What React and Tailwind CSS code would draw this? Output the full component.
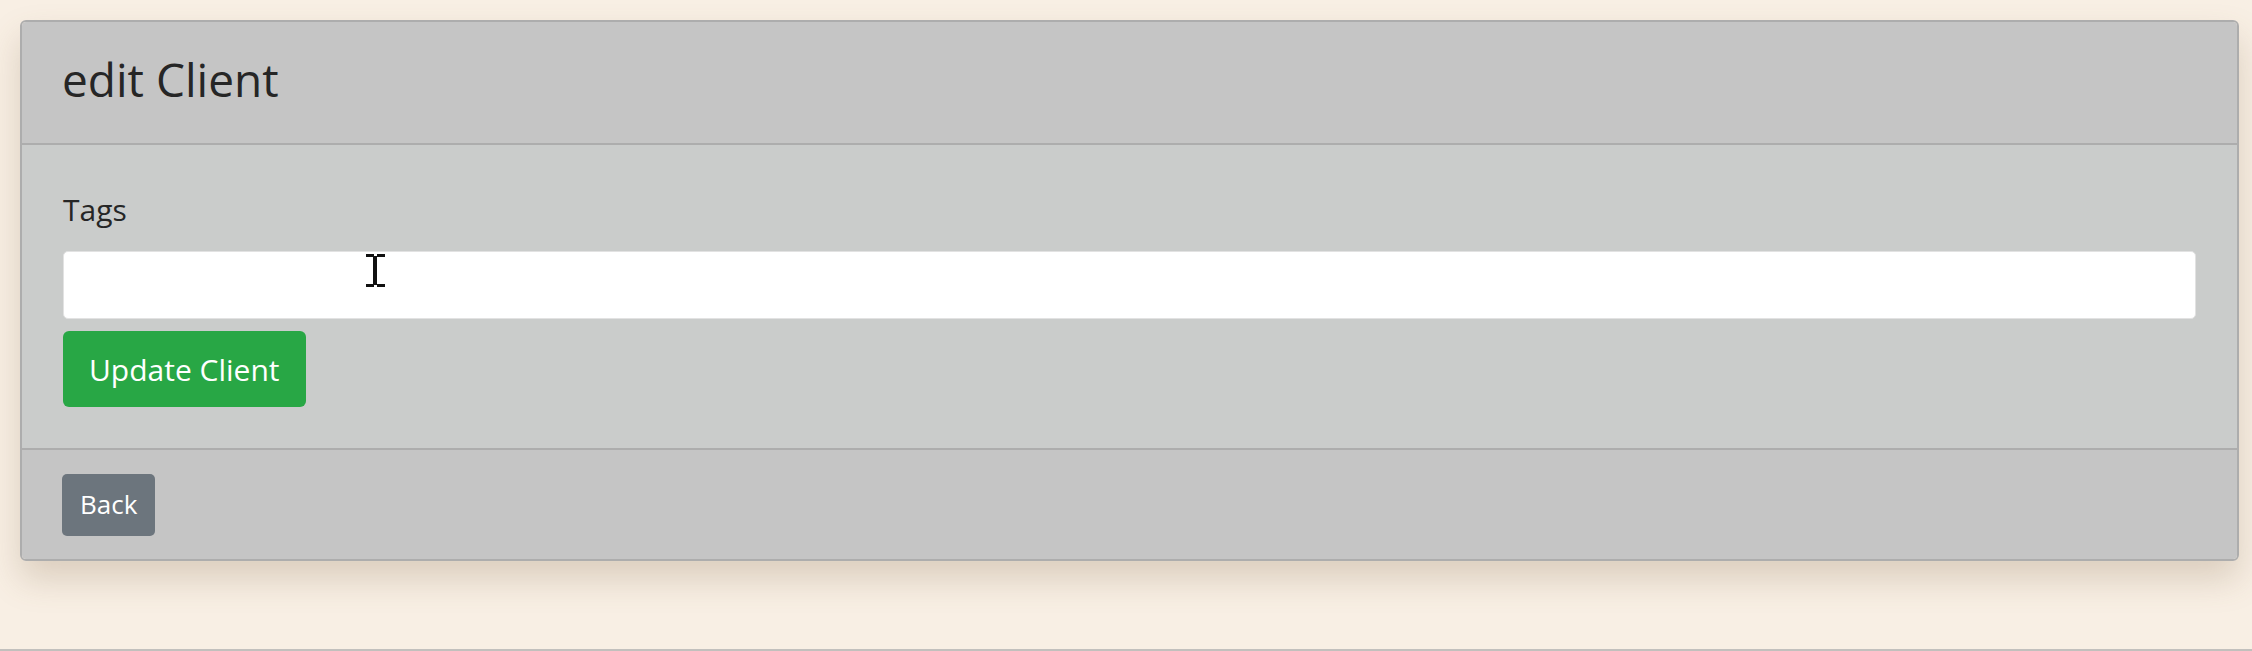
import React, { useState } from "react";

function App() {
  const [tags, setTags] = useState("");

  return (
    <div
      className="h-[651px] bg-[#f8efe4] pt-[20px] pl-[20px] pr-[13px] border-b-2 border-[#c2c0bd]"
      style={{ fontFamily: '"Open Sans", "Noto Sans", sans-serif' }}
    >
      {/* Card */}
      <div className="border-2 border-[#adadad] rounded-[6px] overflow-hidden shadow-[0_18px_34px_rgba(120,90,60,0.22)]">
        {/* Header */}
        <div className="h-[123px] bg-[#c5c5c5] border-b-2 border-[#adadad] flex items-center pl-[40px]">
          <h1 className="text-[46px] leading-none text-[#262626] pb-[8px]">edit Client</h1>
        </div>

        {/* Body */}
        <div className="bg-[#cacccb] pt-[42px] pb-[41px] pl-[41px] pr-[41px]">
          <label className="block text-[30px] leading-[46px] text-[#262626]">Tags</label>
          <div className="relative mt-[18px]">
            <input
              value={tags}
              onChange={(e) => setTags(e.target.value)}
              className="block w-full h-[68px] bg-white rounded-[5px] border border-[#e2e2e2] outline-none px-4 text-[28px]"
            />
            {/* mouse cursor */}
            <svg
              className="absolute left-[303px] top-[3px] pointer-events-none"
              width="20"
              height="34"
              viewBox="0 0 20 34"
            >
              <path d="M0 0h8v3H0zM11 0h8v3h-8zM0 30h8v3H0zM11 30h8v3h-8zM7 2h4v29H7z" fill="#111" />
            </svg>
          </div>
          <button className="mt-[12px] h-[76px] px-[26px] bg-[#28a745] text-white text-[30px] rounded-[6px]">
            Update Client
          </button>
        </div>

        {/* Footer */}
        <div className="h-[111px] bg-[#c5c5c5] border-t-2 border-[#adadad] flex items-center pl-[40px]">
          <button className="h-[62px] px-[18px] bg-[#6c757d] text-white text-[26px] rounded-[5px]">
            Back
          </button>
        </div>
      </div>
    </div>
  );
}

export default App;
